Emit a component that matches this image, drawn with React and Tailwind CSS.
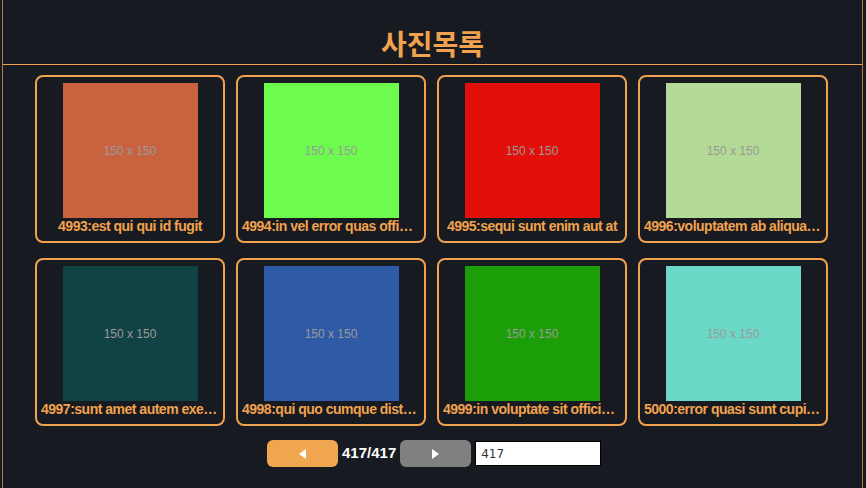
const PHOTOS = [
  { id: 4993, title: "est qui qui id fugit", color: "bg-[#c8623f]" },
  { id: 4994, title: "in vel error quas officia dolorem", color: "bg-[#6dfb4d]" },
  { id: 4995, title: "sequi sunt enim aut at", color: "bg-[#e30f0a]" },
  { id: 4996, title: "voluptatem ab aliquam molestiae", color: "bg-[#b3da96]" },
  { id: 4997, title: "sunt amet autem exercitationem", color: "bg-[#124344]" },
  { id: 4998, title: "qui quo cumque distinctio", color: "bg-[#2f5ba6]" },
  { id: 4999, title: "in voluptate sit officia non", color: "bg-[#1c9e08]" },
  { id: 5000, title: "error quasi sunt cupiditate", color: "bg-[#6cd9c8]" }
];

const FONT = "[font-family:'Liberation_Sans',Arial,sans-serif]";

const PhotoCard = ({ photo }) => (
  <div className="w-[190px] h-[168px] border-2 border-[#f0a24e] rounded-lg flex flex-col items-center pt-[6px] px-[4px]">
    <div className={`w-[135px] h-[135px] ${photo.color} flex items-center justify-center`}>
      <span className="text-[12px] text-[#9a9a9a] [font-family:'Liberation_Sans_Narrow','Liberation_Sans',sans-serif]">150 x 150</span>
    </div>
    <p className={`w-full text-center truncate text-[14px] leading-[17px] font-bold text-[#f0a24e] tracking-[-0.5px] ${FONT}`}>
      {photo.id}:{photo.title}
    </p>
  </div>
);

export default function App() {
  return (
    <div className="min-h-[488px] bg-[#171a20] pl-[2px] pr-[3px]">
      <div className="min-h-[488px] border-x border-[#b77c3c]">
        <div className="h-[65px] flex items-end justify-center border-b border-[#f0a24e] pb-[2px]">
          <h1 className="text-[28px] leading-[38px] font-bold text-[#f0a24e] [font-family:'Noto_Sans_CJK_KR',sans-serif]">사진목록</h1>
        </div>
        <div className="pl-[32px] pt-[10px] grid grid-cols-[repeat(4,190px)] gap-x-[11px] gap-y-[15px]">
          {PHOTOS.map((p) => (
            <PhotoCard key={p.id} photo={p} />
          ))}
        </div>
        <div className="mt-[14px] flex items-center pl-[264px]">
          <button className="w-[71px] h-[27px] rounded-md bg-[#f0a54f] flex items-center justify-center">
            <span className="w-0 h-0 border-y-[5px] border-y-transparent border-r-[7px] border-r-white"></span>
          </button>
          <span className={`mx-[4px] text-[15px] font-bold text-white ${FONT}`}>417/417</span>
          <button className="w-[71px] h-[27px] rounded-md bg-[#808080] flex items-center justify-center">
            <span className="w-0 h-0 border-y-[5px] border-y-transparent border-l-[7px] border-l-white"></span>
          </button>
          <input
            className="ml-[4px] w-[126px] h-[25px] bg-white border border-black px-[5px] text-[12px] text-[#333] outline-none [font-family:'DejaVu_Sans',sans-serif]"
            defaultValue="417"
          />
        </div>
      </div>
    </div>
  );
}
